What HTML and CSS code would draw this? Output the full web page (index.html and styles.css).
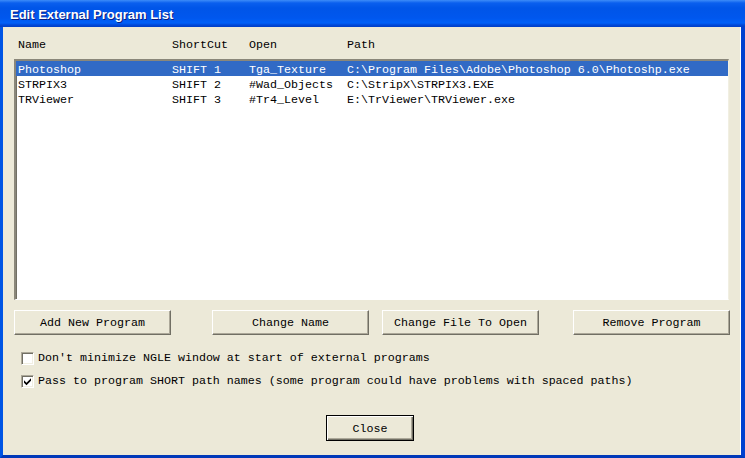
FILE: index.html
```html
<!DOCTYPE html>
<html>
<head>
<meta charset="utf-8">
<link rel="stylesheet" href="styles.css">
</head>
<body>
<div class="window">
  <div class="titlebar"><span class="title">Edit External Program List</span></div>
  <div class="client">
    <div class="cols header">
      <span>Name</span><span>ShortCut</span><span>Open</span><span>Path</span>
    </div>
    <div class="listbox">
      <div class="cols row selected">
        <span>Photoshop</span><span>SHIFT 1</span><span>Tga_Texture</span><span>C:\Program Files\Adobe\Photoshop 6.0\Photoshp.exe</span>
      </div>
      <div class="cols row">
        <span>STRPIX3</span><span>SHIFT 2</span><span>#Wad_Objects</span><span>C:\StripX\STRPIX3.EXE</span>
      </div>
      <div class="cols row">
        <span>TRViewer</span><span>SHIFT 3</span><span>#Tr4_Level</span><span>E:\TrViewer\TRViewer.exe</span>
      </div>
    </div>
    <div class="buttons">
      <button class="btn b1">Add New Program</button>
      <button class="btn b2">Change Name</button>
      <button class="btn b3">Change File To Open</button>
      <button class="btn b4">Remove Program</button>
    </div>
    <div class="checks">
      <label class="check"><span class="box"></span><span class="ctext">Don't minimize NGLE window at start of external programs</span></label>
      <label class="check"><span class="box"><svg width="9" height="9" viewBox="0 0 9 9"><path d="M1 3.2 L3.5 5.7 L8 1.2 L8 3.8 L3.5 8.3 L1 5.8 Z" fill="#000"/></svg></span><span class="ctext">Pass to program SHORT path names (some program could have problems with spaced paths)</span></label>
    </div>
    <div class="footer">
      <button class="btn default">Close</button>
    </div>
  </div>
</div>
</body>
</html>
```

FILE: styles.css
```css
html, body {
  margin: 0;
  padding: 0;
  background: #ECE9D8;
}
.window {
  width: 745px;
  height: 458px;
  display: flex;
  flex-direction: column;
  font-family: "Liberation Mono", "Courier New", monospace;
  font-size: 11.67px;
  color: #000;
}
.titlebar {
  height: 27px;
  flex: none;
  background: linear-gradient(#3D8CF8 0px, #0A5FEE 3px, #0055E8 8px, #0057EE 18px, #0060F8 23px, #0048D8 25px, #003EC6 27px);
  display: flex;
  align-items: center;
  padding-left: 10px;
  padding-top: 2px;
  box-sizing: border-box;
}
.title {
  color: #fff;
  font-family: "Liberation Sans", Arial, sans-serif;
  font-weight: bold;
  font-size: 13px;
  text-shadow: 1px 1px 0 #0A1E80;
}
.client {
  flex: 1;
  background: #ECE9D8;
  border-left: 3px solid #0055E5;
  border-right: 4px solid #0040D0;
  border-bottom: 3px solid #0038B8;
  box-shadow: inset -1px 0 0 #fff;
  padding: 11px 0 0 11px;
  display: flex;
  flex-direction: column;
}
.cols {
  display: grid;
  grid-template-columns: 154px 77px 98px 1fr;
  height: 15px;
  line-height: 15px;
  white-space: pre;
}
.header {
  padding-left: 4px;
  margin-bottom: 6px;
}
.listbox {
  width: 715px;
  height: 241px;
  box-sizing: border-box;
  background: #fff;
  border-top: 2px solid #8A877A;
  border-left: 2px solid #8A877A;
  border-bottom: 1px solid #fff;
  border-right: 1px solid #F1EFE2;
  box-shadow: inset 1px 1px 0 #716F64;
}
.row {
  padding-left: 2px;
  box-sizing: border-box;
}
.row > span {
  position: relative;
  top: 2px;
}
.selected {
  background: #316AC5;
  color: #fff;
}
.buttons {
  display: flex;
  margin-top: 10px;
  height: 25px;
}
.btn {
  font-family: "Liberation Mono", "Courier New", monospace;
  font-size: 11.67px;
  color: #000;
  background: #ECE9D8;
  height: 25px;
  width: 157px;
  padding: 1px 0 0 0;
  box-sizing: border-box;
  border: none;
  border-top: 1px solid #fff;
  border-left: 1px solid #fff;
  border-right: 1px solid #716F64;
  border-bottom: 1px solid #716F64;
  box-shadow: inset -1px -1px 0 #ACA899;
  border-radius: 0;
}
.b2 { margin-left: 41px; }
.b3 { margin-left: 13px; }
.b4 { margin-left: 34px; }
.checks {
  margin-top: 16px;
  padding-left: 7px;
  display: flex;
  flex-direction: column;
  gap: 10px;
}
.check {
  display: flex;
  align-items: center;
  height: 13px;
  line-height: 13px;
  white-space: pre;
}
.ctext {
  position: relative;
  top: 1px;
}
.box {
  width: 13px;
  height: 13px;
  box-sizing: border-box;
  background: #fff;
  border-top: 1px solid #ACA899;
  border-left: 1px solid #ACA899;
  border-right: 1px solid #fff;
  border-bottom: 1px solid #fff;
  box-shadow: inset 1px 1px 0 #716F64, inset -1px -1px 0 #F1EFE2;
  margin-right: 4px;
  display: flex;
  align-items: center;
  justify-content: center;
  flex: none;
  position: relative;
  top: 1px;
}
.footer {
  margin-top: 28px;
  padding-left: 312px;
}
.default {
  width: 88px;
  height: 26px;
  border: 1px solid #000;
  box-shadow: inset 1px 1px 0 #fff, inset -1px -1px 0 #716F64, inset -2px -2px 0 #ACA899;
}
```
